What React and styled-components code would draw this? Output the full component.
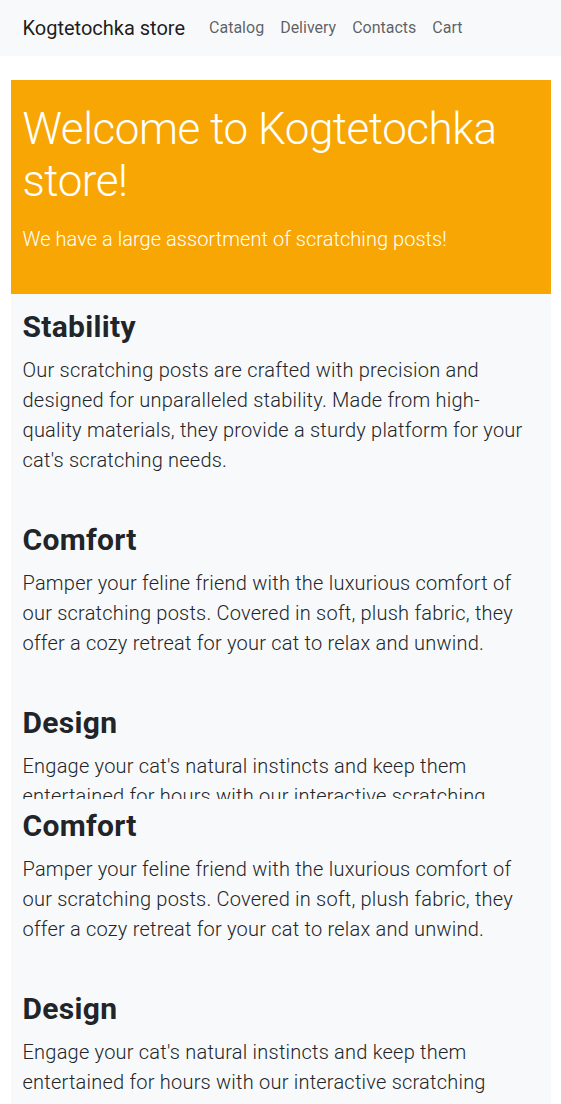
import React from "react";
import styled, { createGlobalStyle } from "styled-components";

const GlobalStyle = createGlobalStyle`
  body {
    margin: 0;
    background: #fff;
    font-family: Roboto, "Noto Sans", sans-serif;
    color: #212529;
  }
  * {
    box-sizing: border-box;
  }
`;

const features = [
  {
    title: "Stability",
    text: "Our scratching posts are crafted with precision and designed for unparalleled stability. Made from high-quality materials, they provide a sturdy platform for your cat's scratching needs.",
  },
  {
    title: "Comfort",
    text: "Pamper your feline friend with the luxurious comfort of our scratching posts. Covered in soft, plush fabric, they offer a cozy retreat for your cat to relax and unwind.",
  },
  {
    title: "Design",
    text: "Engage your cat's natural instincts and keep them entertained for hours with our interactive scratching posts, designed with enticing textures and tantalizing features.",
  },
];

const App = () => {
  return (
    <>
      <GlobalStyle />
      <Navbar>
        <NavInner>
          <Brand href="#">Kogtetochka store</Brand>
          <NavLinks>
            <NavLink href="#">Catalog</NavLink>
            <NavLink href="#">Delivery</NavLink>
            <NavLink href="#">Contacts</NavLink>
            <NavLink href="#">Cart</NavLink>
          </NavLinks>
        </NavInner>
      </Navbar>
      <Main>
        <Hero>
          <HeroTitle>Welcome to Kogtetochka store!</HeroTitle>
          <Lead>We have a large assortment of scratching posts!</Lead>
        </Hero>
        {/* first list is clipped, second copy continues below */}
        <Panel $top={15} $height={505}>
          {features.map((f) => (
            <Feature key={f.title}>
              <FeatureTitle>{f.title}</FeatureTitle>
              <FeatureText>{f.text}</FeatureText>
            </Feature>
          ))}
        </Panel>
        <Panel $top={8.5}>
          {features.slice(1).map((f) => (
            <Feature key={f.title}>
              <FeatureTitle>{f.title}</FeatureTitle>
              <FeatureText>{f.text}</FeatureText>
            </Feature>
          ))}
        </Panel>
      </Main>
    </>
  );
};

const Navbar = styled.nav`
  background: #f8f9fa;
  padding: 8px 0;
`;

const NavInner = styled.div`
  width: 540px;
  margin: 0 auto;
  padding: 0 12px;
  display: flex;
  align-items: center;
`;

const Brand = styled.a`
  font-size: 20px;
  line-height: 30px;
  padding: 5px 0;
  margin-right: 16px;
  color: rgba(0, 0, 0, 0.9);
  text-decoration: none;
`;

const NavLinks = styled.div`
  display: flex;
`;

const NavLink = styled.a`
  font-size: 16px;
  line-height: 24px;
  padding: 8px;
  color: rgba(33, 37, 41, 0.72);
  text-decoration: none;
`;

const Main = styled.main`
  width: 540px;
  margin: 24px auto 0;
`;

const Hero = styled.section`
  background: #f7a604;
  color: #fff;
  padding: 23px 12px 40px;
`;

const HeroTitle = styled.h1`
  margin: 0 0 17px;
  font-size: 44px;
  line-height: 52px;
  letter-spacing: -0.45px;
  font-weight: 300;
`;

const Lead = styled.p`
  margin: 0;
  font-size: 20px;
  line-height: 30px;
  letter-spacing: 0.05px;
  font-weight: 300;
`;

const Panel = styled.div`
  background: #f8f9fa;
  padding: ${(p) => p.$top}px 12px 0;
  height: ${(p) => (p.$height ? `${p.$height}px` : "auto")};
  overflow: hidden;
  display: flex;
  flex-direction: column;
  gap: 47px;
`;

const Feature = styled.article``;

const FeatureTitle = styled.h2`
  margin: 0 0 10px;
  font-size: 30px;
  line-height: 36px;
  font-weight: 700;
  letter-spacing: 0.3px;
  color: #212529;
`;

const FeatureText = styled.p`
  margin: 0;
  font-size: 20px;
  line-height: 30px;
  font-weight: 300;
  letter-spacing: 0.22px;
  color: #212529;
`;

export default App;
